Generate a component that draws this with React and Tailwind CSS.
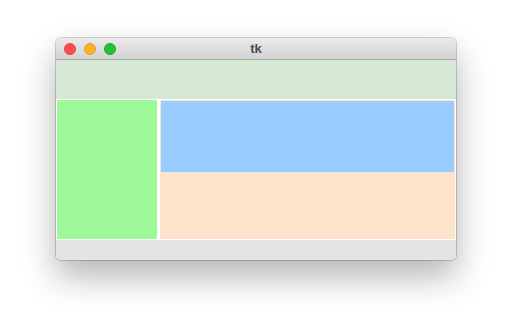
export default function App() {
  return (
    <div className="w-[512px] h-[334px] bg-white pt-[38px] pl-[56px]" style={{ fontFamily: '"Liberation Sans", Arial, sans-serif' }}>
      <div className="w-[400px] h-[222px] rounded-[5px] overflow-hidden bg-white shadow-[0_0_0_1px_rgba(0,0,0,0.18),0_16px_34px_rgba(0,0,0,0.3)] flex flex-col">
        <div className="relative h-[22px] shrink-0 bg-gradient-to-b from-[#ebebeb] to-[#d2d2d2] border-b border-[#a8a8a8] flex items-center">
          <div className="flex items-center gap-[8px] pl-[8px]">
            <span className="w-[12px] h-[12px] rounded-full bg-[#fd4b4a] border border-[#e0443e]" />
            <span className="w-[12px] h-[12px] rounded-full bg-[#feb024] border border-[#dea123]" />
            <span className="w-[12px] h-[12px] rounded-full bg-[#25c134] border border-[#1aab29]" />
          </div>
          <span className="absolute left-0 right-0 text-center text-[13px] font-bold text-[#4a4a4a] leading-none">tk</span>
        </div>
        <div className="flex-1 flex flex-col bg-white">
          <div className="h-[39px] bg-[#d5e8d4]" />
          <div className="h-[139px] mt-[1px] flex pl-[1px] pr-[1px] gap-[3px]">
            <div className="w-[100px] bg-[#9efa99]" />
            <div className="flex-1 bg-[#ffe4cc] p-[1px]">
              <div className="h-[71px] bg-[#99ccff]" />
            </div>
          </div>
          <div className="flex-1 mt-[1px] bg-[#e4e4e4]" />
        </div>
      </div>
    </div>
  );
}
